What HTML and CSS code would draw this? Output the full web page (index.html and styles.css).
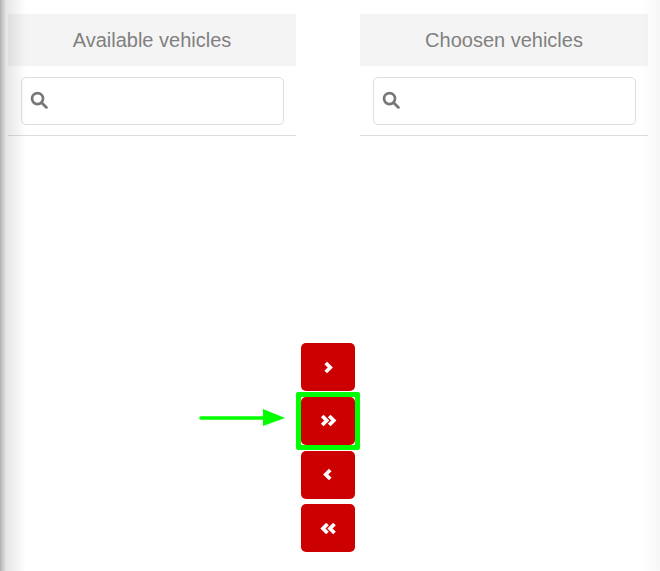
FILE: index.html
```html
<!DOCTYPE html>
<html lang="en">
<head>
  <meta charset="UTF-8" />
  <meta name="viewport" content="width=device-width, initial-scale=1.0"/>
  <title>Vehicles</title>
  <link rel="stylesheet" href="styles.css">
</head>
<body>
  <div class="picker">
    <section class="panel">
      <h2 class="panel-title">Available vehicles</h2>
      <div class="search">
        <svg class="search-icon" viewBox="0 0 16 16"><circle cx="6.7" cy="6.7" r="4.9"/><path d="M10.4 10.4L14.6 14.6"/></svg>
        <input class="search-input" type="text" aria-label="Search available vehicles">
      </div>
    </section>

    <div class="movers">
      <button class="move-btn" aria-label="Add">
        <svg viewBox="0 0 16 12"><path d="M6.2 2.4L9.8 6L6.2 9.6"/></svg>
      </button>
      <div class="marker">
        <button class="move-btn" aria-label="Add all">
          <svg viewBox="0 0 16 12"><path d="M3.4 2.4L7 6L3.4 9.6M9 2.4L12.6 6L9 9.6"/></svg>
        </button>
      </div>
      <button class="move-btn" aria-label="Remove">
        <svg viewBox="0 0 16 12"><path d="M9.8 2.4L6.2 6L9.8 9.6"/></svg>
      </button>
      <button class="move-btn" aria-label="Remove all">
        <svg viewBox="0 0 16 12"><path d="M7.6 2.4L4 6L7.6 9.6M13.2 2.4L9.6 6L13.2 9.6"/></svg>
      </button>
    </div>

    <section class="panel">
      <h2 class="panel-title">Choosen vehicles</h2>
      <div class="search">
        <svg class="search-icon" viewBox="0 0 16 16"><circle cx="6.7" cy="6.7" r="4.9"/><path d="M10.4 10.4L14.6 14.6"/></svg>
        <input class="search-input" type="text" aria-label="Search chosen vehicles">
      </div>
    </section>
  </div>

  <svg class="callout" viewBox="0 0 90 20"><path d="M2 10H66" /><polygon points="64,1 86,10 64,18"/></svg>
  <div class="edge-shade"></div>
</body>
</html>
```

FILE: styles.css
```css
html, body {
  height: 100%;
}

body {
  margin: 0;
  background-color: #fff;
  font-family: "Liberation Sans", Arial, sans-serif;
  color: #808080;
  overflow: hidden;
}

.picker {
  display: grid;
  grid-template-columns: 288px 64px 288px;
  padding: 14px 12px 0 8px;
}

.panel {
  height: 121px;
  border-bottom: 1px solid #ddd;
}

.panel-title {
  margin: 0;
  height: 52px;
  line-height: 52px;
  background-color: #f4f4f4;
  font-size: 20px;
  font-weight: normal;
  text-align: center;
}

.search {
  position: relative;
  margin: 11px 12px 0 13px;
}

.search-input {
  display: block;
  box-sizing: border-box;
  width: 100%;
  height: 48px;
  border: 1px solid #ddd;
  border-radius: 5px;
  background-color: #fff;
}

.search-icon {
  position: absolute;
  left: 9px;
  top: 14px;
  width: 18px;
  height: 18px;
  fill: none;
  stroke: #777;
  stroke-width: 2.4;
  stroke-linecap: round;
}

.movers {
  display: flex;
  flex-direction: column;
  align-items: center;
  gap: 5.75px;
  padding-top: 329px;
}

.move-btn {
  display: flex;
  align-items: center;
  justify-content: center;
  width: 54px;
  height: 48px;
  padding: 0;
  border: none;
  border-radius: 5px;
  background-color: #cc0000;
}

.move-btn svg {
  width: 20px;
  height: 15px;
  fill: none;
  stroke: #fff;
  stroke-width: 3;
}

.marker {
  margin: -5px;
  border: 5px solid #00ff00;
  border-radius: 2px;
}

.callout {
  position: absolute;
  left: 199px;
  top: 408px;
  width: 90px;
  height: 20px;
  fill: #00ff00;
  stroke: none;
}

.callout path {
  stroke: #00ff00;
  stroke-width: 3.6;
  stroke-linecap: round;
}

.edge-shade {
  position: absolute;
  top: 0;
  left: 0;
  right: 0;
  bottom: 0;
  pointer-events: none;
  background:
    linear-gradient(to right, rgba(0, 0, 0, 0.3), rgba(0, 0, 0, 0.1) 6px, rgba(0, 0, 0, 0) 26px),
    linear-gradient(to left, rgba(0, 0, 0, 0.03), rgba(0, 0, 0, 0) 20px);
}
```
